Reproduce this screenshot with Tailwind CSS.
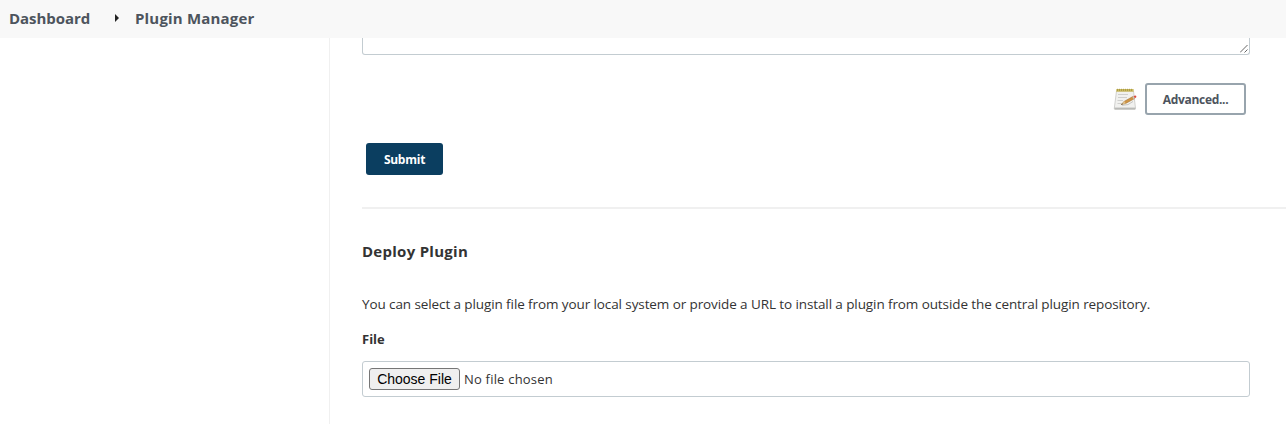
<!DOCTYPE html>
<html lang="en">
<head>
<meta charset="utf-8">
<title>Plugin Manager</title>
<script src="https://cdn.jsdelivr.net/npm/@tailwindcss/browser@4"></script>
</head>
<body class="flex h-[424px] w-[1286px] flex-col overflow-hidden bg-white font-['Open_Sans','Noto_Sans',sans-serif] text-sm text-[#333]">
<nav class="flex h-[38px] shrink-0 items-center bg-[#f8f8f8] pl-[9px] pb-px text-[15px] font-bold whitespace-nowrap text-[#4d545d]">
  <a class="w-[106px] tracking-[-.05px]">Dashboard</a>
  <svg class="mr-4 mb-px h-2 w-1" viewBox="0 0 4 8"><path d="M0 0L4 4L0 8Z" fill="#222"/></svg>
  <a class="tracking-[.18px]">Plugin Manager</a>
</nav>
<div class="flex flex-1">
  <aside class="w-[330px] shrink-0 border-r border-[#f0f0f0]"></aside>
  <main class="flex w-[956px] flex-col pl-8">
    <div class="flex h-[17px] w-[888px] shrink-0 items-end justify-end rounded-b-[3px] border border-t-0 border-[#c3ccd1] pr-px pb-px">
      <svg class="h-2 w-2" viewBox="0 0 8 8" fill="none" stroke="#555" stroke-width=".9"><path d="M0 7.5L7.5 0M4.5 7.5L7.5 4.5"/></svg>
    </div>
    <div class="mt-7 flex h-8 w-[884px] shrink-0 items-center justify-end gap-2">
      <svg class="h-6 w-6" viewBox="0 0 24 24">
        <path d="M3.5 4H20.5L22.5 21.3Q22.6 22.3 22 22.3H2Q1.2 22.3 1.3 21.3Z" fill="#f1f1ef" stroke="#c6c7c4" stroke-width=".8"/>
        <path d="M1.5 20.6H22.3V22.4H1.5Z" fill="#b9bab7"/>
        <path d="M3.4 2H20.6V4.8H3.2Z" fill="#cbbb62"/>
        <path d="M4.5 1.8V4M6.5 1.8V4M8.5 1.8V4M10.5 1.8V4M12.5 1.8V4M14.5 1.8V4M16.5 1.8V4M18.5 1.8V4" stroke="#a59540" stroke-width=".8"/>
        <path d="M5 7.5H15M5 10.5H14M4.5 13.5H10M4.5 16.5H8" stroke="#cfcfcd"/>
        <path d="M9 18.3L15 17.6L20 14.5" stroke="#c4c4c2" fill="none"/>
        <path d="M8 17.6L11.5 14.2L20.2 9.3L21.6 11.6L12.7 16.5Z" fill="#cf9443" stroke="#9a6829" stroke-width=".5"/>
        <path d="M8 17.6L11.5 14.2L12.7 16.5Z" fill="#dfc08a"/>
        <path d="M7.8 17.7L9.3 16.2L9.9 17.2Z" fill="#555"/>
        <path d="M19.2 9.8L20.6 9L22 11.3L20.6 12.1Z" fill="#c8c4c0"/>
        <path d="M20.6 9Q22.6 7.9 23.3 9Q23.8 10.2 22 11.3Z" fill="#dc4a3f"/>
      </svg>
      <button class="h-8 w-[101px] rounded-[3px] border-2 border-[#98a4ad] pt-px text-xs font-bold tracking-[-.3px] text-[#4d545d]">Advanced...</button>
    </div>
    <button class="mt-7 ml-1 h-8 w-[77px] shrink-0 rounded-[3px] bg-[#0b3e60] pt-px text-xs font-bold tracking-[-.25px] text-white">Submit</button>
    <hr class="mt-8 shrink-0 border-t-2 border-[#f0f0f0]">
    <h2 class="mt-[30px] h-6 text-[15px] leading-6 font-bold tracking-[.27px]">Deploy Plugin</h2>
    <p class="mt-[31px] h-5 text-[13.5px] leading-5 tracking-[-.098px] whitespace-nowrap">You can select a plugin file from your local system or provide a URL to install a plugin from outside the central plugin repository.</p>
    <div class="mt-[15px] h-5 text-[13px] leading-5 font-bold">File</div>
    <div class="mt-3 flex h-9 w-[888px] shrink-0 items-center gap-1 rounded-[3px] border border-[#c3ccd1] px-1.5">
      <button class="h-[22px] w-[91px] rounded-[3px] border border-[#767676] bg-[#efefef] font-['Liberation_Sans',sans-serif] text-sm leading-5 whitespace-nowrap text-black">Choose File</button>
      <span class="text-[13px] tracking-[.2px] whitespace-nowrap">No file chosen</span>
    </div>
  </main>
</div>
</body>
</html>
